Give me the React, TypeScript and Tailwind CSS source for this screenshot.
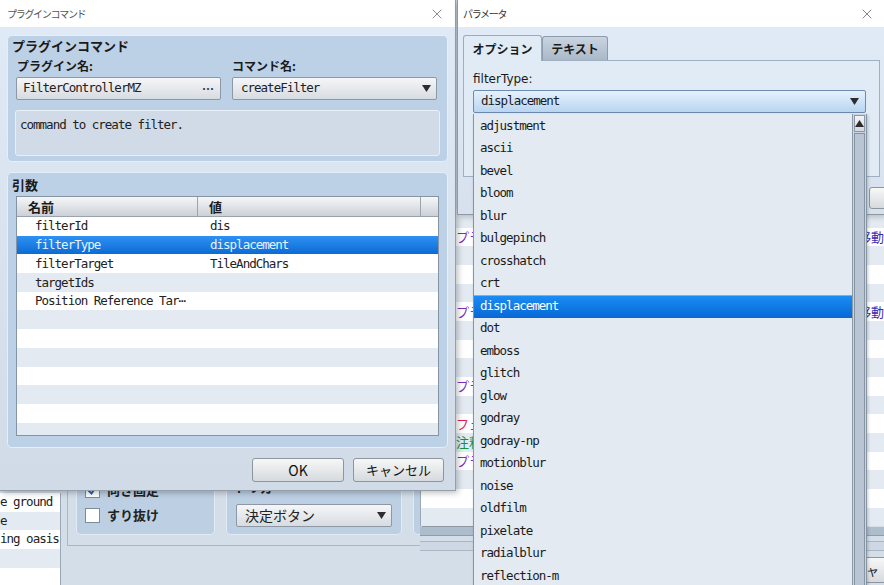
import React from 'react';
import { X } from 'lucide-react';

const MONO = "font-['DejaVu_Sans_Mono',monospace] text-[12.5px] tracking-[-1px]";

const filters = [
  'adjustment', 'ascii', 'bevel', 'bloom', 'blur', 'bulgepinch', 'crosshatch', 'crt',
  'displacement', 'dot', 'emboss', 'glitch', 'glow', 'godray', 'godray-np', 'motionblur',
  'noise', 'oldfilm', 'pixelate', 'radialblur', 'reflection-m',
];

const args: [string, string][] = [
  ['filterId', 'dis'],
  ['filterType', 'displacement'],
  ['filterTarget', 'TileAndChars'],
  ['targetIds', ''],
  ['Position Reference Tar⋯', ''],
  ['', ''], ['', ''], ['', ''], ['', ''], ['', ''], ['', ''], ['', ''],
];

// background event list rows (only slivers are visible between the dialogs)
const contents: { left?: string; color?: string; right?: string }[] = [
  {}, { left: 'プラ', color: 'text-[#7b2fbf]', right: '移動' }, {}, {}, {},
  { left: 'プラ', color: 'text-[#7b2fbf]', right: '移動' }, {}, {}, {},
  { left: 'プラ', color: 'text-[#7b2fbf]' }, {},
  { left: 'フェ', color: 'text-[#e8184a]' },
  { left: '注釈', color: 'text-[#17913a]' },
  { left: 'プラ', color: 'text-[#7b2fbf]' }, {}, {}, {},
];

const Down = () => (
  <svg width="9" height="7" viewBox="0 0 9 7">
    <path d="M0 0h9L4.5 7z" fill="#2d2d2d" />
  </svg>
);

const Up = () => (
  <svg width="9" height="7" viewBox="0 0 9 7">
    <path d="M0 7h9L4.5 0z" fill="#2d2d2d" />
  </svg>
);

const Background = () => (
  <div className="absolute inset-0">
    {/* map list on the left */}
    <div className={`absolute left-0 top-[493px] w-[61px] border-r border-[#9aa8b6] ${MONO} text-[#222] overflow-hidden`}>
      {['e ground', 'e', 'ing oasis', '', ''].map((t, i) => (
        <div key={i} className={`h-[18.7px] leading-[18.7px] whitespace-nowrap ${i % 2 ? 'bg-[#e3eaf2]' : 'bg-white'}`}>
          {t}
        </div>
      ))}
    </div>

    {/* option groups */}
    <div className="absolute left-[67px] top-[440px] w-[430px] h-[106px] border-l border-b border-[#a8b6c5] flex gap-[11px] pl-[8px] pb-[10px]">
      <div className="w-[139px] h-full rounded-[5px] bg-[#bccfe3] border border-[#e2ebf5] flex flex-col justify-end pl-[8px] pb-[8px]">
        <div className="h-[22px] mb-[3px] flex items-center gap-[7px]">
          <span className="w-[15px] h-[15px] bg-white border border-[#7d8a98] flex items-center justify-center">
            <svg width="11" height="11" viewBox="0 0 11 11">
              <path d="M1.5 5.5l3 3 5-7" stroke="#2a5fb8" strokeWidth="2" fill="none" />
            </svg>
          </span>
          <span className="text-[13px] font-bold text-[#222]">向き固定</span>
        </div>
        <div className="h-[22px] flex items-center gap-[7px]">
          <span className="w-[15px] h-[15px] bg-white border border-[#7d8a98]" />
          <span className="text-[13px] font-bold text-[#222]">すり抜け</span>
        </div>
      </div>
      <div className="w-[176px] h-full rounded-[5px] bg-[#bccfe3] border border-[#e2ebf5] flex flex-col justify-end gap-[8px] pl-[9px] pr-[9px] pb-[7px]">
        <div className="text-[13px] font-bold leading-[18px] text-[#222] -ml-[2px]">トリガー</div>
        <div className="h-[23px] rounded-[2px] border border-[#8d98a4] bg-gradient-to-b from-[#f5f6f8] to-[#d7dce2] flex items-center justify-between pl-[8px] pr-[5px]">
          <span className="text-[14px] text-[#222]">決定ボタン</span>
          <Down />
        </div>
      </div>
      <div className="w-[80px] h-full rounded-[5px] bg-[#bccfe3] border border-[#e2ebf5] flex flex-col justify-end pl-[8px] pb-[7px]">
        <div className="bg-white border border-[#8d98a4] text-[13px] text-[#222]">
          <div className="h-[19px] leading-[19px] pl-[16px] bg-white">:</div>
          <div className="h-[19px] leading-[19px] pl-[16px] bg-[#e3eaf2]">:</div>
        </div>
      </div>
    </div>

    {/* event contents list */}
    <div className="absolute left-[420px] top-[209px] w-[464px] border-l border-[#9aa8b6]">
      {contents.map((r, i) => (
        <div key={i} className={`h-[18.67px] flex items-center pl-[35px] text-[13px] whitespace-nowrap ${i % 2 ? 'bg-white' : 'bg-[#e3eaf2]'}`}>
          <span className={`w-[411px] ${r.color ?? ''}`}>{r.left}</span>
          <span className="text-[#3a2bb5]">{r.right}</span>
        </div>
      ))}
    </div>
    <div className="absolute left-[420px] top-[527px] w-[464px] h-[9px] bg-[#aebdcc] border-b border-[#8e9dad]" />
    <div className="absolute left-[420px] top-[541px] w-[464px] h-[10px] border-y border-[#a9b6c4] bg-[#cdd8e4]" />
    <div className="absolute left-[840px] top-[557px] w-[90px] h-[26px] rounded-[3px] border border-[#8d959e] bg-gradient-to-b from-[#f7f7f7] to-[#d6dade] flex items-center pl-[12px] text-[13px] text-[#222]">
      キャ
    </div>
  </div>
);

const PluginDialog = () => (
  <div className="absolute left-0 top-0 w-[456px] h-[491px] flex flex-col border-r border-b border-[#959fa9] shadow-[2px_2px_6px_rgba(0,0,0,0.25)]">
    <div className="h-[27px] bg-white flex items-center justify-between pl-[7px] pr-[10px]">
      <span className="text-[10px] tracking-[-1.3px] text-[#555]">プラグインコマンド</span>
      <X size={16} strokeWidth={1} color="#555" />
    </div>
    <div className="flex-1 bg-gradient-to-b from-[#dfeaf6] to-[#d0dbe7] px-[7px] pt-[8px]">
      {/* plugin command group */}
      <div className="h-[127px] rounded-[5px] bg-[#bdd1e6] border border-[#e6eef7] px-[8px] pt-[1px] pb-[5px] flex flex-col">
        <div className="text-[13px] font-bold leading-[18px] text-[#1a1a1a] -ml-[4px]">プラグインコマンド</div>
        <div className="flex gap-[11px] mt-[2px]">
          <div className="w-[205px]">
            <div className="text-[12px] font-bold leading-[18px] text-[#1a1a1a] pl-[1px]">プラグイン名:</div>
            <div className="mt-[2px] h-[23px] rounded-[2px] border border-[#8d98a4] bg-gradient-to-b from-[#f5f6f8] to-[#d7dce2] flex items-center justify-between pl-[6px] pr-[6px]">
              <span className={`${MONO} text-[#222]`}>FilterControllerMZ</span>
              <span className="text-[12px] font-bold text-[#333]">⋯</span>
            </div>
          </div>
          <div className="w-[205px]">
            <div className="text-[12px] font-bold leading-[18px] text-[#1a1a1a]">コマンド名:</div>
            <div className="mt-[2px] h-[23px] rounded-[2px] border border-[#8d98a4] bg-gradient-to-b from-[#f5f6f8] to-[#d7dce2] flex items-center justify-between pl-[8px] pr-[5px]">
              <span className={`${MONO} text-[#222]`}>createFilter</span>
              <Down />
            </div>
          </div>
        </div>
        <div className={`mt-[10px] -mx-[1px] h-[46px] rounded-[3px] bg-[#d0dbe7] border border-[#e8eff7] pl-[4px] pt-[6px] leading-[16px] ${MONO} text-[#222]`}>
          command to create filter.
        </div>
      </div>

      {/* arguments group */}
      <div className="mt-[10px] h-[276px] rounded-[5px] bg-[#bdd1e6] border border-[#e6eef7] px-[8px] pt-[3px] pb-[11px] flex flex-col">
        <div className="text-[13px] font-bold leading-[18px] text-[#1a1a1a] -ml-[4px]">引数</div>
        <div className="mt-[2px] flex-1 border border-[#8593a2] bg-white overflow-hidden flex flex-col">
          <div className="h-[20px] shrink-0 flex bg-gradient-to-b from-[#f6f6f7] to-[#ccd1d7] border-b border-[#98a3ae] text-[13px] font-bold text-[#1a1a1a] leading-[19px]">
            <div className="w-[181px] pl-[11px] border-r border-[#9aa5b0]">名前</div>
            <div className="w-[223px] pl-[11px] border-r border-[#9aa5b0]">値</div>
            <div className="flex-1" />
          </div>
          {args.map(([k, v], i) => (
            <div
              key={i}
              className={`h-[18.7px] shrink-0 flex items-center pt-[1px] ${MONO} ${
                i === 1
                  ? 'bg-gradient-to-b from-[#2e91f2] to-[#0a6bd6] text-[#e8f2ff]'
                  : i % 2
                  ? 'bg-[#e3eaf2] text-[#222]'
                  : 'bg-white text-[#222]'
              }`}
            >
              <span className="w-[181px] pl-[18px] whitespace-nowrap">{k}</span>
              <span className="pl-[12px]">{v}</span>
            </div>
          ))}
        </div>
      </div>

      <div className="mt-[10px] flex justify-end gap-[9px] pr-[4px]">
        <button className="w-[92px] h-[24px] rounded-[3px] border border-[#8d959e] bg-gradient-to-b from-[#f7f7f7] to-[#d6dade] text-[14px] text-[#111]">
          OK
        </button>
        <button className="w-[91px] h-[24px] rounded-[3px] border border-[#8d959e] bg-gradient-to-b from-[#f7f7f7] to-[#d6dade] text-[13px] text-[#111]">
          キャンセル
        </button>
      </div>
    </div>
  </div>
);

const ParamDialog = () => (
  <div className="absolute left-[457px] top-0 w-[427px] h-[215px] flex flex-col border-l border-b border-[#8f99a3] shadow-[2px_2px_6px_rgba(0,0,0,0.2)]">
    <div className="h-[27px] bg-white flex items-center justify-between pl-[5px] pr-[9px]">
      <span className="text-[10px] tracking-[-1.3px] text-[#333]">パラメータ</span>
      <X size={16} strokeWidth={1} color="#444" />
    </div>
    <div className="flex-1 bg-gradient-to-b from-[#e0ebf7] to-[#d6e1ed] pl-[5px] pt-[8px]">
      <div className="flex items-end">
        <div className="relative z-10 w-[79px] h-[26px] -mb-px rounded-t-[3px] border border-b-0 border-[#9aabbd] bg-[#e0ebf6] flex items-center justify-center text-[12px] font-bold text-[#1a1a1a]">
          オプション
        </div>
        <div className="w-[66px] h-[24px] rounded-t-[3px] border border-b-0 border-[#8d9cac] bg-gradient-to-b from-[#c9d4e0] to-[#aab8c8] flex items-center justify-center text-[12px] font-bold text-[#1a1a1a]">
          テキスト
        </div>
      </div>
      <div className="w-[417px] h-[117px] border border-[#9fb0c2] bg-[#e1ebf6] pl-[9px] pt-[9px]">
        <div className="text-[12px] leading-[18px] text-[#1a1a1a] font-['DejaVu_Sans',sans-serif]">filterType:</div>
        <div className="mt-[2px] w-[393px] h-[23px] rounded-[2px] border border-[#6c8bb0] bg-gradient-to-b from-[#e6f1fc] to-[#b8d5f2] flex items-center justify-between pl-[7px] pr-[6px]">
          <span className={`${MONO} text-[#1a1a1a]`}>displacement</span>
          <Down />
        </div>
      </div>
      <div className="mt-[10px] ml-[406px] w-[80px] h-[22px] rounded-[3px] border border-[#8d959e] bg-gradient-to-b from-[#f7f7f7] to-[#d6dade]" />
    </div>
  </div>
);

const Dropdown = () => (
  <div className="absolute left-[473px] top-[114px] w-[394px] h-[480px] flex bg-[#e3eaf2] border-l border-r border-[#8795a3] shadow-[1px_1px_3px_rgba(0,0,0,0.2)]">
    <div className="flex-1 flex flex-col pt-[1px]">
      {filters.map((f) => (
        <div
          key={f}
          className={`h-[22.5px] shrink-0 flex items-center pl-[6px] ${MONO} ${
            f === 'displacement'
              ? 'bg-gradient-to-b from-[#1a8cf6] to-[#0868d4] border-t border-[#6fb2f7] text-white'
              : 'text-[#1a1a1a]'
          }`}
        >
          {f}
        </div>
      ))}
    </div>
    <div className="w-[14px] border-l border-[#8b98a6] bg-[#ccd5df] flex flex-col pt-[1px]">
      <div className="h-[17px] mx-[1px] border border-[#8d98a4] bg-gradient-to-b from-[#f3f5f7] to-[#d2d8df] flex items-center justify-center">
        <Up />
      </div>
      <div className="flex-1 mx-[1px] mt-[1px] border border-[#8494a5] bg-[#b9c5d2]" />
    </div>
  </div>
);

export default function App() {
  return (
    <div className="relative w-[884px] h-[585px] overflow-hidden bg-[#d3dee9] font-['Noto_Sans_CJK_JP',sans-serif]">
      <Background />
      <PluginDialog />
      <ParamDialog />
      <Dropdown />
    </div>
  );
}
